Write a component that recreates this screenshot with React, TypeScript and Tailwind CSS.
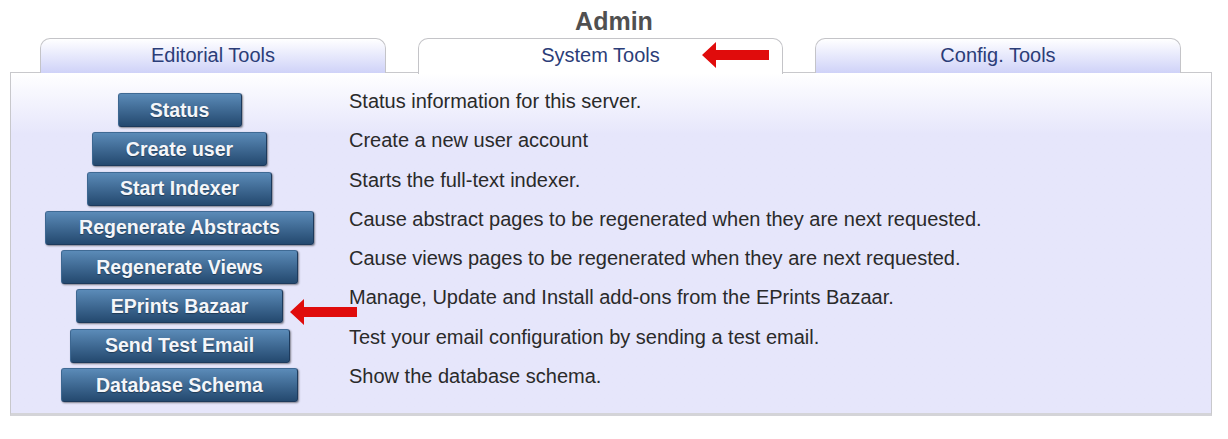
import React from 'react';

const TOOLS = [
  { label: 'Status', width: 'w-[124px]', text: 'Status information for this server.' },
  { label: 'Create user', width: 'w-[175px]', text: 'Create a new user account' },
  { label: 'Start Indexer', width: 'w-[185px]', text: 'Starts the full-text indexer.' },
  { label: 'Regenerate Abstracts', width: 'w-[269px]', text: 'Cause abstract pages to be regenerated when they are next requested.' },
  { label: 'Regenerate Views', width: 'w-[237px]', text: 'Cause views pages to be regenerated when they are next requested.' },
  { label: 'EPrints Bazaar', width: 'w-[207px]', text: 'Manage, Update and Install add-ons from the EPrints Bazaar.' },
  { label: 'Send Test Email', width: 'w-[220px]', text: 'Test your email configuration by sending a test email.' },
  { label: 'Database Schema', width: 'w-[237px]', text: 'Show the database schema.' },
];

function RedArrow({ className }: { className: string }) {
  return (
    <svg className={className} width="68" height="26" viewBox="0 0 68 26">
      <polygon points="0,13 14,0 14,8 67,8 67,18 14,18 14,26" fill="#e00c0c" />
    </svg>
  );
}

export default function App() {
  return (
    <div className="relative bg-white w-[1228px] h-[439px] font-['Liberation_Sans',Arial,sans-serif]">
      <h1 className="pt-[7px] h-[38px] text-center text-[25px] leading-[28px] font-bold text-[#505050]">Admin</h1>

      <div className="flex ml-[40px] gap-[32px] h-[35px]">
        <div className="w-[346px] rounded-t-[10px] border border-b-0 border-[#c4c4c8] bg-gradient-to-b from-white to-[#cfd2f8] text-center text-[20px] leading-[33px] text-[#2b3d78]">
          Editorial Tools
        </div>
        <div className="relative z-10 w-[365px] h-[36px] rounded-t-[10px] border border-b-0 border-[#c4c4c8] bg-white text-center text-[20px] leading-[33px] text-[#2b3d78]">
          System Tools
        </div>
        <div className="w-[366px] rounded-t-[10px] border border-b-0 border-[#c4c4c8] bg-gradient-to-b from-white to-[#cfd2f8] text-center text-[20px] leading-[33px] text-[#2b3d78]">
          Config. Tools
        </div>
      </div>

      <div className="ml-[10px] -mt-px w-[1202px] h-[344px] border border-[#c8c8cc] border-b-[3px] border-b-[#d4d4d8] bg-gradient-to-b from-white to-[#e6e6fb] from-[0%] to-[18%] pt-[20px]">
        {TOOLS.map((t) => (
          <div key={t.label} className="flex items-start h-[39.3px]">
            <div className="w-[337px] flex justify-center">
              <button
                className={`${t.width} h-[34px] rounded-[3px] border border-[#1d3a5c] border-t-[#3f6a94] border-l-[#3d6791] bg-gradient-to-b from-[#5b8bb8] to-[#24496f] text-[#f4f6fa] font-bold text-[19.5px] leading-[31px] shadow-[1px_1px_2px_rgba(0,0,0,0.45)] [text-shadow:0_1px_1px_rgba(0,0,0,0.35)]`}
              >
                {t.label}
              </button>
            </div>
            <p className="pl-[1px] -mt-[2px] text-[20px] leading-[21px] text-[#2a2a2a]">{t.text}</p>
          </div>
        ))}
      </div>

      <RedArrow className="absolute z-20 left-[702px] top-[42px]" />
      <RedArrow className="absolute z-20 left-[290px] top-[299px]" />
    </div>
  );
}
